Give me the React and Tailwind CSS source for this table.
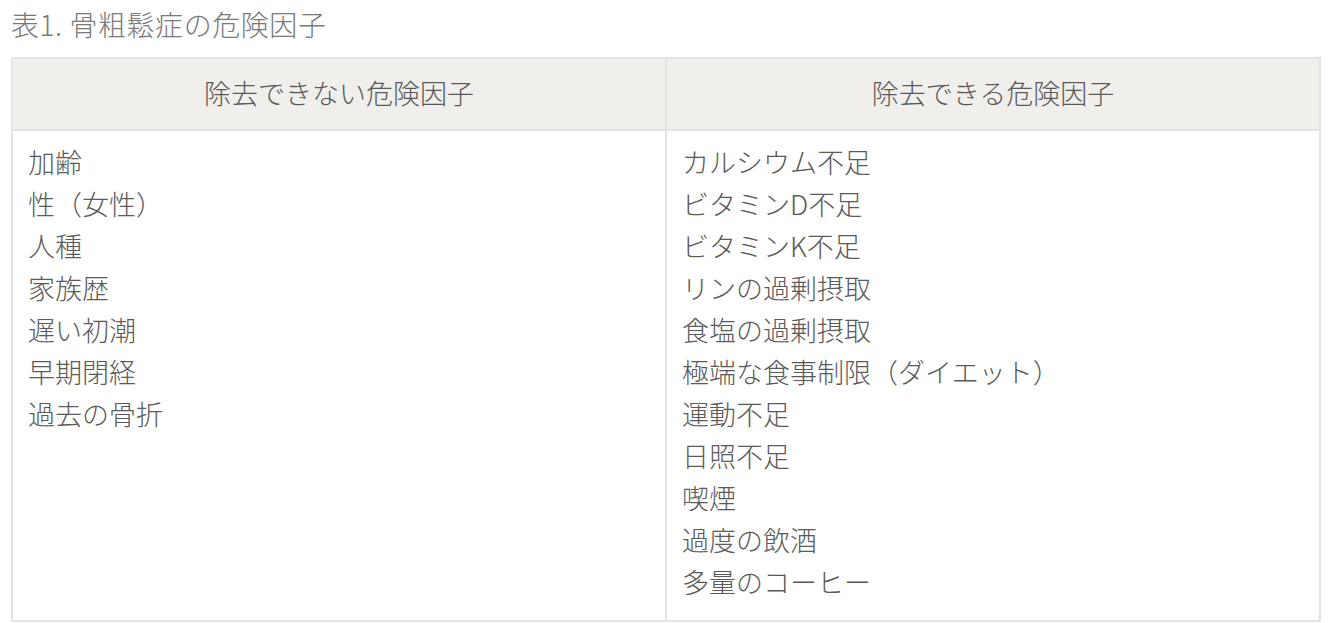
import React from "react";

const fixed = ["加齢", "性（女性）", "人種", "家族歴", "遅い初潮", "早期閉経", "過去の骨折"];
const changeable = [
  "カルシウム不足",
  "ビタミンD不足",
  "ビタミンK不足",
  "リンの過剰摂取",
  "食塩の過剰摂取",
  "極端な食事制限（ダイエット）",
  "運動不足",
  "日照不足",
  "喫煙",
  "過度の飲酒",
  "多量のコーヒー",
];

export default function App() {
  return (
    <div
      className="bg-white text-[#5a5a5a] font-light px-[11px] pt-[6px]"
      style={{ fontFamily: '"Noto Sans CJK JP", "Noto Sans", sans-serif' }}
    >
      <p className="text-[28px] leading-[36px] text-[#7a7a7a] mb-[15px] tracking-[0.02em]">表1. 骨粗鬆症の危険因子</p>
      <table className="w-[1310px] border-collapse border-2 border-[#e3e3e3] text-[27px]">
        <thead>
          <tr className="bg-[#f0efeb]">
            <th className="w-1/2 h-[72px] pb-[2px] font-light border-2 border-[#e3e3e3]">除去できない危険因子</th>
            <th className="w-1/2 h-[72px] pb-[2px] font-light border-2 border-[#e3e3e3]">除去できる危険因子</th>
          </tr>
        </thead>
        <tbody>
          <tr>
            <td className="align-top border-2 border-[#e3e3e3] px-[15px] pt-[10px] pb-[17px] leading-[42px]">
              {fixed.map((t) => (
                <div key={t}>{t}</div>
              ))}
            </td>
            <td className="align-top border-2 border-[#e3e3e3] px-[15px] pt-[10px] pb-[17px] leading-[42px]">
              {changeable.map((t) => (
                <div key={t}>{t}</div>
              ))}
            </td>
          </tr>
        </tbody>
      </table>
    </div>
  );
}
